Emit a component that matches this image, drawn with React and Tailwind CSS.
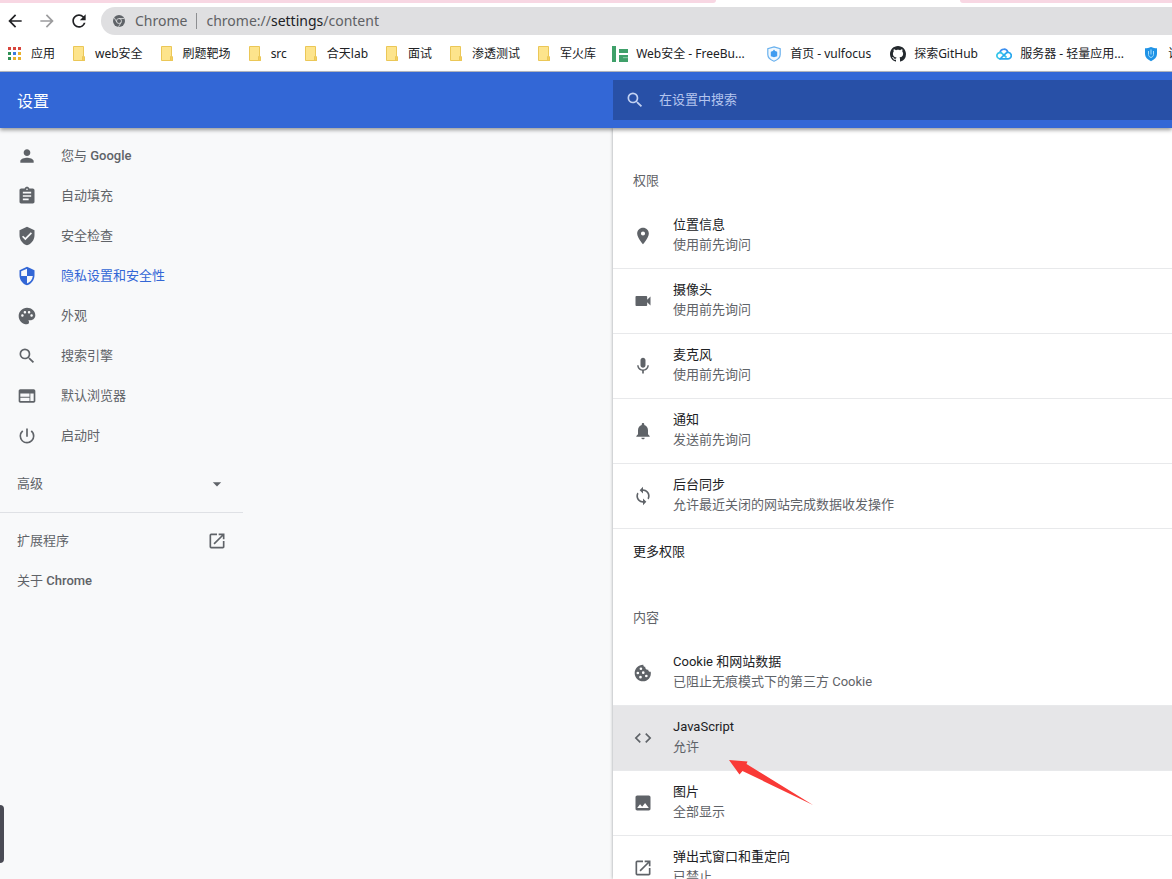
import {
  MdArrowBack,
  MdArrowDropDown,
  MdArrowForward,
  MdAssignment,
  MdCode,
  MdImage,
  MdLocationOn,
  MdMic,
  MdNotifications,
  MdOpenInNew,
  MdPalette,
  MdPerson,
  MdPowerSettingsNew,
  MdRefresh,
  MdSearch,
  MdSecurity,
  MdSync,
  MdVerifiedUser,
  MdVideocam,
  MdWeb,
} from "react-icons/md";

function ChromeIcon() {
  return (
    <svg width="12" height="12" viewBox="0 0 24 24" className="shrink-0">
      <circle cx="12" cy="12" r="12" fill="#5f6368" />
      <circle cx="12" cy="12" r="5" fill="none" stroke="#dfdfe1" strokeWidth="1.6" />
      <path d="M12 7h10.5M7.7 14.5 2.4 5.4M16.3 14.5 11 23.7" stroke="#dfdfe1" strokeWidth="1.6" fill="none" />
    </svg>
  );
}

function AppsIcon() {
  const colors = ["#d8453c", "#d8453c", "#d8453c", "#2f9155", "#3c7be0", "#eab12c", "#2f9155", "#eab12c", "#eab12c"];
  return (
    <svg width="16" height="16" viewBox="0 0 16 16" className="shrink-0">
      {colors.map((color, i) => (
        <rect key={i} x={1 + (i % 3) * 5} y={1 + Math.floor(i / 3) * 5} width="3" height="3" fill={color} />
      ))}
    </svg>
  );
}

function FolderIcon() {
  return (
    <svg width="16" height="16" viewBox="0 0 16 16" className="shrink-0">
      <path d="M2.5.5h10v9.5l1 1v3.5h-11z" fill="#fde48c" stroke="#ebc757" />
      <path d="M11.5 10.500v4h2V11z" fill="#f6cf5e" stroke="#ebc757" />
    </svg>
  );
}

function FreeBufIcon() {
  return (
    <svg width="16" height="16" viewBox="0 0 16 16" className="shrink-0" fill="#3fa06a">
      <path d="M0 0h4v16H0zM7 3h9v4H7zM7 9h9v7H7z" />
      <path d="M11 11h5v1.200h-5z" fill="#7dc39c" />
    </svg>
  );
}

function VulfocusIcon() {
  return (
    <svg width="16" height="16" viewBox="0 0 16 16" className="shrink-0">
      <path d="M8 .8 14.200 2.600v6c0 3.200-2.800 5.400-6.200 6.600-3.400-1.200-6.200-3.400-6.200-6.600v-6z" fill="#f1f8fe" stroke="#69b1ee" strokeWidth="1.200" />
      <path d="M8 3.500l1.200 1.500 2 .8v4.400L8 11.200l-3.200-1V5.800l2-.8z" fill="#409cf0" />
    </svg>
  );
}

function GithubIcon() {
  return (
    <svg width="16" height="16" viewBox="0 0 16 16" className="shrink-0" fill="#24292e">
      <path d="M8 0C3.580 0 0 3.580 0 8c0 3.540 2.290 6.530 5.470 7.590.4.070.55-.17.55-.38 0-.19-.01-.82-.01-1.490-2.010.37-2.530-.49-2.690-.94-.09-.23-.48-.94-.82-1.130-.28-.15-.68-.52-.01-.53.63-.01 1.080.58 1.230.82.72 1.210 1.870.87 2.330.66.07-.52.28-.87.51-1.070-1.780-.2-3.640-.89-3.640-3.950 0-.87.31-1.590.82-2.150-.08-.2-.36-1.020.08-2.120 0 0 .67-.21 2.200.82.64-.18 1.320-.27 2-.27s1.360.09 2 .27c1.530-1.040 2.200-.82 2.200-.82.44 1.100.16 1.920.08 2.120.51.56.82 1.270.82 2.150 0 3.070-1.870 3.750-3.650 3.950.29.25.54.73.54 1.480 0 1.070-.01 1.930-.01 2.200 0 .21.15.46.55.38A8.010 8.010 0 0 0 16 8c0-4.420-3.580-8-8-8z" />
    </svg>
  );
}

function CloudIcon() {
  return (
    <svg width="16" height="16" viewBox="0 0 16 16" className="shrink-0" fill="none" strokeWidth="1.700" strokeLinecap="round">
      <path d="M4 6.500A4 4 0 0 1 11.800 6.200" stroke="#3b8ff0" />
      <path d="M4 12.800A3.100 3.100 0 1 1 6.300 7.600L10 11" stroke="#35c6ea" />
      <path d="M4 12.800h8A3.200 3.200 0 1 0 9.800 7.300L5 12" stroke="#28a8ee" />
    </svg>
  );
}

function ShieldIcon() {
  return (
    <svg width="16" height="16" viewBox="0 0 16 16" className="shrink-0">
      <path d="M7 1c2 1 4 1.200 6 1.200v5.800c0 3.200-2.500 5.500-6 7.200-3.500-1.700-6-4-6-7.200V2.200C3 2.200 5 2 7 1z" fill="#2093e6" />
      <path d="M4.500 5v3.500c0 1.500 1 2.500 2.500 3 1.500-.5 2.500-1.500 2.500-3V5M7 3.500v5" stroke="#a5dcfb" fill="none" />
    </svg>
  );
}

function CookieIcon({ className }) {
  return (
    <svg width="20" height="20" viewBox="0 0 24 24" className={className} fill="currentColor">
      <path
        fillRule="evenodd"
        d="M21.300 10.400c-1.600.4-3.200-.7-3-2.400-2.300.5-4-1.300-3.600-3.400-1.600-.2-2.500-1.300-2.300-2.600C6.600 1.800 2 6.500 2 12c0 5.500 4.500 10 10 10s10.300-4.800 9.300-11.600zM9.500 5.300a1.600 1.600 0 1 0 0 3.200 1.600 1.600 0 0 0 0-3.200zM5.800 10.400a1.600 1.600 0 1 0 0 3.200 1.600 1.600 0 0 0 0-3.200zM12.300 10a1.600 1.600 0 1 0 0 3.200 1.600 1.600 0 0 0 0-3.200zM9 15.400a1.600 1.600 0 1 0 0 3.200 1.600 1.600 0 0 0 0-3.200zM16 14a1.600 1.600 0 1 0 0 3.200 1.600 1.600 0 0 0 0-3.200z"
      />
    </svg>
  );
}

const bookmarks = [
  { label: "应用", icon: AppsIcon },
  { label: "web安全", icon: FolderIcon },
  { label: "刷题靶场", icon: FolderIcon },
  { label: "src", icon: FolderIcon },
  { label: "合天lab", icon: FolderIcon },
  { label: "面试", icon: FolderIcon },
  { label: "渗透测试", icon: FolderIcon },
  { label: "军火库", icon: FolderIcon },
  { label: "Web安全 - FreeBu...", icon: FreeBufIcon, width: "w-[114px]" },
  { label: "首页 - vulfocus", icon: VulfocusIcon, width: "w-[84px]" },
  { label: "探索GitHub", icon: GithubIcon, width: "w-[66px]" },
  { label: "服务器 - 轻量应用...", icon: CloudIcon, width: "w-[108px]" },
  { label: "课程", icon: ShieldIcon },
];

const menu = [
  { label: <>您与 <span className="font-medium">Google</span></>, icon: MdPerson },
  { label: "自动填充", icon: MdAssignment },
  { label: "安全检查", icon: MdVerifiedUser },
  { label: "隐私设置和安全性", icon: MdSecurity, active: true },
  { label: "外观", icon: MdPalette },
  { label: "搜索引擎", icon: MdSearch },
  { label: "默认浏览器", icon: MdWeb },
  { label: "启动时", icon: MdPowerSettingsNew },
];

const permissions = [
  { title: "位置信息", sub: "使用前先询问", icon: MdLocationOn },
  { title: "摄像头", sub: "使用前先询问", icon: MdVideocam },
  { title: "麦克风", sub: "使用前先询问", icon: MdMic },
  { title: "通知", sub: "发送前先询问", icon: MdNotifications },
  { title: "后台同步", sub: "允许最近关闭的网站完成数据收发操作", icon: MdSync },
];

const contents = [
  { title: "Cookie 和网站数据", sub: "已阻止无痕模式下的第三方 Cookie", icon: CookieIcon },
  { title: "JavaScript", sub: "允许", icon: MdCode, selected: true },
  { title: "图片", sub: "全部显示", icon: MdImage },
  { title: "弹出式窗口和重定向", sub: "已禁止", icon: MdOpenInNew },
];

function BrowserBar() {
  return (
    <div className="shrink-0 bg-white border-b border-[#b9bcc4]">
      <div className="flex justify-between h-[3px]">
        <div className="w-[716px] bg-[#f8d7e3] rounded-br-md"></div>
        <div className="w-[212px] bg-[#f8d7e3] rounded-bl-md"></div>
      </div>
      <div className="flex items-center h-9 pl-[5px]">
        <button type="button" aria-label="后退" className="text-[#202124]"><MdArrowBack size={20} /></button>
        <button type="button" aria-label="前进" className="ml-3 text-[#9c9c9e]"><MdArrowForward size={20} /></button>
        <button type="button" aria-label="重新加载" className="ml-3 text-[#202124]"><MdRefresh size={20} /></button>
        <div className="ml-3 pl-3 flex flex-1 items-center h-7 rounded-l-full bg-[#dfdfe1] text-sm text-[#606164]">
          <ChromeIcon />
          <span className="ml-[10px]">Chrome</span>
          <span className="mx-[9px] w-px h-4 bg-[#8d8e91]"></span>
          <span>chrome://<span className="text-[#202124]">settings</span>/content</span>
        </div>
      </div>
      <nav className="flex items-center gap-4 h-8 pl-[7px] pb-0.5 overflow-hidden text-xs text-[#202124]">
        {bookmarks.map(({ label, icon: Icon, width }) => (
          <a key={label} href="#" className="flex shrink-0 items-center gap-2 whitespace-nowrap">
            <Icon />
            <span className={width}>{label}</span>
          </a>
        ))}
      </nav>
    </div>
  );
}

function Sidebar() {
  return (
    <aside className="w-[613px] shrink-0 pt-2 text-[#5f6368]">
      <nav>
        {menu.map(({ label, icon: Icon, active }, i) => (
          <a key={i} href="#" className={`flex items-center h-10 pl-[17px] gap-6 ${active ? "text-[#3367d6]" : ""}`}>
            <Icon size={20} />
            <span>{label}</span>
          </a>
        ))}
      </nav>
      <div className="w-[243px]">
        <button type="button" className="mt-2 flex w-full h-10 items-center justify-between pl-[17px] pr-4">
          高级
          <MdArrowDropDown size={20} />
        </button>
        <div className="mt-2 mb-2 border-t border-[#dfe1e5]"></div>
        <a href="#" className="flex h-10 items-center justify-between pl-[17px] pr-4">
          扩展程序
          <MdOpenInNew size={20} />
        </a>
        <a href="#" className="flex h-10 items-center pl-[17px]">
          <span>关于 <span className="font-medium">Chrome</span></span>
        </a>
      </div>
    </aside>
  );
}

// red arrow drawn over the selected row
function Pointer() {
  return (
    <svg width="86" height="48" viewBox="0 0 86 48" className="absolute left-[115px] top-[53px] z-10 pointer-events-none">
      <path d="M1 1 19.500 2.500 18.500 5 85 46 14.500 12 11.500 15.500z" fill="#f93a37" />
    </svg>
  );
}

function Row({ item, first }) {
  const Icon = item.icon;
  return (
    <a
      href="#"
      className={`relative flex items-center pl-5 gap-5 ${first ? "h-16" : "h-[65px] border-t border-[#e8e9eb]"} ${item.selected ? "bg-[#e6e6e8]" : ""}`}
    >
      <Icon size={20} className="shrink-0 text-[#5f6368]" />
      <div className="pb-0.5 leading-5">
        <div className="text-[#202124]">{item.title}</div>
        <div className="text-[#5f6368]">{item.sub}</div>
      </div>
      {item.selected && <Pointer />}
    </a>
  );
}

function App() {
  return (
    <div className="relative flex flex-col h-screen overflow-hidden bg-[#f8f9fa] font-['Noto_Sans','Noto_Sans_CJK_SC',sans-serif]">
      <BrowserBar />
      <div className="flex flex-col flex-1 min-h-0 text-[13px] font-['Roboto','Noto_Sans_CJK_SC',sans-serif]">
        <header className="relative z-10 flex shrink-0 items-center h-14 bg-[#3367d6] shadow-[0_2px_4px_rgba(0,0,0,0.4)]">
          <h1 className="w-[613px] shrink-0 pl-[17px] pt-1 text-base text-white">设置</h1>
          <label className="flex flex-1 items-center h-10 pl-3 gap-[14px] bg-[#2850a7] text-[#c2d1f2]">
            <MdSearch size={20} />
            <input type="text" aria-label="在设置中搜索" placeholder="在设置中搜索" className="flex-1 min-w-0 outline-none placeholder:text-[#b4c5ee]" />
          </label>
        </header>
        <div className="flex flex-1 min-h-0">
          <Sidebar />
          <main className="flex-1 min-w-0 overflow-hidden bg-white pt-8 shadow-[0_0_3px_rgba(60,64,67,0.5)]">
            <h2 className="flex items-center h-11 pl-5 pb-0.5 text-[#5f6368]">权限</h2>
            {permissions.map((item, i) => (
              <Row key={item.title} item={item} first={i === 0} />
            ))}
            <button type="button" className="flex w-full items-center h-12 pl-5 pb-0.5 border-t border-[#e8e9eb] text-[#202124]">更多权限</button>
            <h2 className="mt-[21px] flex items-center h-11 pl-5 pb-0.5 text-[#5f6368]">内容</h2>
            {contents.map((item, i) => (
              <Row key={item.title} item={item} first={i === 0} />
            ))}
          </main>
        </div>
      </div>
      <div className="absolute left-0 bottom-4 w-1 h-[58px] rounded-r bg-[#4a4b55]"></div>
    </div>
  );
}

export default App;
